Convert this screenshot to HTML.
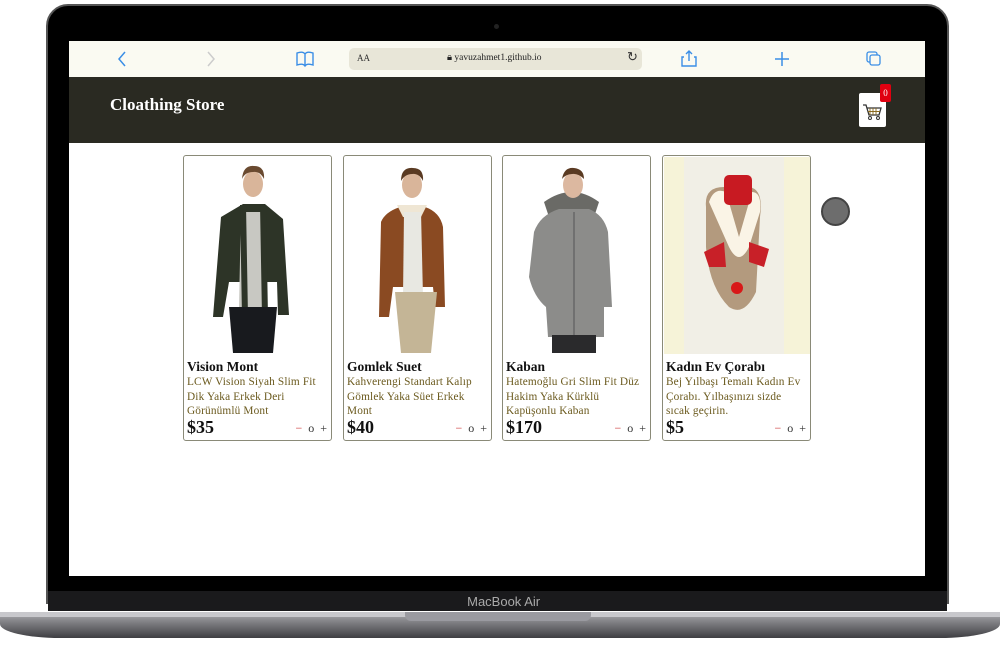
<!DOCTYPE html>
<html><head><meta charset="utf-8"><style>
*{margin:0;padding:0;box-sizing:border-box}
body{width:1000px;height:646px;background:#fff;position:relative;overflow:hidden;font-family:"Liberation Serif",serif}
.abs{position:absolute}
.card{position:absolute;top:155px;width:149px;height:286px;border:1px solid #8a8a78;border-radius:3px;background:#fff;overflow:hidden}
.card svg{position:absolute;left:1px;top:1px}
.t{position:absolute;left:3px;top:203px;font-weight:bold;font-size:13.5px;color:#111}
.d{position:absolute;left:3px;top:219px;width:142px;font-size:11.3px;line-height:14.5px;color:#6b5a1e;letter-spacing:0.15px}
.p{position:absolute;left:3px;top:261px;font-weight:bold;font-size:18px;color:#111}
.q{position:absolute;right:4px;top:265px;font-size:12px;color:#333;letter-spacing:0}
.q b{color:#c33;font-weight:normal}
</style></head><body>
<!-- lid -->
<div class="abs" style="left:46px;top:4px;width:903px;height:600px;background:#000;border-radius:22px 22px 0 0;border:2px solid #555"></div>
<div class="abs" style="left:494px;top:24px;width:5px;height:5px;border-radius:50%;background:#222"></div>
<!-- screen -->
<div class="abs" style="left:69px;top:41px;width:856px;height:535px;background:#fff"></div>
<!-- safari bar -->
<div class="abs" style="left:69px;top:41px;width:856px;height:36px;background:#fafaf2"></div>
<div class="abs" style="left:349px;top:48px;width:293px;height:22px;background:#e8e6d8;border-radius:5px"></div>
<div class="abs" style="left:357px;top:53px;font-size:9px;color:#333">AA</div>
<div class="abs" style="left:447px;top:52px;font-size:9.5px;color:#222">🔒︎ yavuzahmet1.github.io</div>
<div class="abs" style="left:627px;top:49px;font-size:13px;color:#333">↻</div>
<svg class="abs" style="left:110px;top:48px" width="800" height="22">
<path d="M15 4 L9 11 L15 18" fill="none" stroke="#3a8ee6" stroke-width="1.5"/>
<path d="M98 4 L104 11 L98 18" fill="none" stroke="#ccc" stroke-width="1.5"/>
<path d="M187 5 Q193 3 195 6 Q197 3 203 5 V17 Q197 15 195 18 Q193 15 187 17 Z M195 6 V18" fill="none" stroke="#3a8ee6" stroke-width="1.4"/>
<path d="M574 9 H572 V18 H586 V9 H584 M579 13 V3 M576 6 L579 3 L582 6" fill="none" stroke="#3a8ee6" stroke-width="1.4"/>
<path d="M665 11 H679 M672 4 V18" stroke="#3a8ee6" stroke-width="1.5"/>
<rect x="757" y="4" width="10" height="10" rx="2" fill="none" stroke="#3a8ee6" stroke-width="1.3"/>
<rect x="760" y="7" width="10" height="10" rx="2" fill="#fafaf2" stroke="#3a8ee6" stroke-width="1.3"/>
</svg>
<!-- header -->
<div class="abs" style="left:69px;top:77px;width:856px;height:66px;background:#2a2a22"></div>
<div class="abs" style="left:110px;top:95px;font-size:17px;font-weight:bold;color:#fff">Cloathing Store</div>
<div class="abs" style="left:859px;top:93px;width:27px;height:34px;background:#fff;border-radius:2px"></div>
<svg class="abs" style="left:862px;top:103px" width="20" height="18"><path d="M1 2 H4 L7 12 H17 L19 5 H5" fill="none" stroke="#333" stroke-width="1.3"/><path d="M8 5 V12 M11 5 V12 M14 5 V12 M6 8.5 H18" stroke="#8a6a20" stroke-width="0.9"/><circle cx="8" cy="15" r="1.5" fill="none" stroke="#333"/><circle cx="16" cy="15" r="1.5" fill="none" stroke="#333"/></svg>
<div class="abs" style="left:880px;top:84px;width:11px;height:18px;background:#e00010;color:#fff;font-size:9px;text-align:center;line-height:18px;border-radius:2px">0</div>
<div class="abs" style="left:821px;top:197px;width:29px;height:29px;border-radius:50%;background:#6d6d6d;border:2px solid #444"></div>

<div class="card" style="left:183px">
<svg width="146" height="197"><rect width="146" height="197" fill="#fff"/>
<ellipse cx="68" cy="27" rx="10" ry="13" fill="#d9b59a"/><path d="M57 22 Q58 8 69 9 Q80 9 79 22 Q75 14 68 15 Q60 15 57 22Z" fill="#6a4a30"/>
<path d="M36 60 L58 47 H80 L98 62 L104 158 H93 L92 125 H44 L38 160 H28Z" fill="#2d3427"/>
<path d="M56 55 H78 L80 150 H54Z" fill="#c8c8c2"/><path d="M58 48 L60 160 M78 48 L80 160" stroke="#2d3427" stroke-width="6"/>
<path d="M44 150 H92 L88 196 H48Z" fill="#181a1e"/></svg>
<div class="t">Vision Mont</div><div class="d">LCW Vision Siyah Slim Fit Dik Yaka Erkek Deri Görünümlü Mont</div><div class="p">$35</div><div class="q"><b>−</b>&nbsp; o &nbsp;+</div></div>

<div class="card" style="left:343px">
<svg width="146" height="197"><rect width="146" height="197" fill="#fff"/>
<ellipse cx="67" cy="28" rx="10" ry="13" fill="#d9b59a"/><path d="M56 24 Q56 10 68 11 Q79 11 78 24 Q74 16 67 17 Q60 17 56 24Z" fill="#5a3a22"/>
<path d="M36 65 Q40 55 55 50 H80 Q95 55 98 70 L100 150 H90 L88 130 H48 L44 160 H34Z" fill="#8a4a22"/>
<path d="M52 48 H82 L76 60 H58Z" fill="#efe6d4"/><path d="M59 55 H76 L78 140 H58Z" fill="#e8e8e2"/>
<path d="M50 135 H92 L86 196 H56Z" fill="#c4b596"/></svg>
<div class="t">Gomlek Suet</div><div class="d">Kahverengi Standart Kalıp Gömlek Yaka Süet Erkek Mont</div><div class="p">$40</div><div class="q"><b>−</b>&nbsp; o &nbsp;+</div></div>

<div class="card" style="left:502px">
<svg width="146" height="197"><rect width="146" height="197" fill="#fff"/>
<path d="M40 45 Q68 25 95 45 L90 60 H45Z" fill="#6a6a66"/>
<ellipse cx="69" cy="28" rx="10" ry="13" fill="#dcb8a0"/><path d="M58 22 Q60 10 70 11 Q80 12 80 22 Q74 16 68 17 Q62 17 58 22Z" fill="#5a3a22"/>
<path d="M30 75 Q36 58 55 52 H85 Q100 58 104 75 L108 150 H100 L100 180 H44 L42 150 Q30 140 25 120Z" fill="#8c8c8a"/>
<path d="M70 55 V178" stroke="#555" stroke-width="1"/>
<path d="M48 178 H92 V196 H48Z" fill="#2a2a2c"/></svg>
<div class="t">Kaban</div><div class="d">Hatemoğlu Gri Slim Fit Düz Hakim Yaka Kürklü Kapüşonlu Kaban</div><div class="p">$170</div><div class="q"><b>−</b>&nbsp; o &nbsp;+</div></div>

<div class="card" style="left:662px">
<svg width="146" height="197"><rect width="146" height="197" fill="#f6f3d8"/>
<rect x="20" y="0" width="100" height="197" fill="#f1efe6"/>
<path d="M42 50 Q40 30 60 30 H85 Q100 32 96 60 L92 135 Q80 160 65 150 Q45 130 42 90Z" fill="#b39a7e"/>
<path d="M45 45 Q50 30 62 35 L75 80 L88 35 Q98 35 96 55 L85 90 Q75 110 65 90Z" fill="#faf4e6"/>
<rect x="60" y="18" width="28" height="30" rx="5" fill="#c81a22"/>
<path d="M40 95 L60 85 L62 110 L45 110Z M85 85 L105 92 L100 110 L85 105Z" fill="#c82028"/>
<circle cx="73" cy="131" r="6" fill="#d81818"/></svg>
<div class="t">Kadın Ev Çorabı</div><div class="d">Bej Yılbaşı Temalı Kadın Ev Çorabı. Yılbaşınızı sizde sıcak geçirin.</div><div class="p">$5</div><div class="q"><b>−</b>&nbsp; o &nbsp;+</div></div>

<!-- bottom bezel -->
<div class="abs" style="left:48px;top:591px;width:899px;height:20px;background:#1a1a1c"></div>
<div class="abs" style="left:0;top:594px;width:1000px;text-align:center;font-family:'Liberation Sans',sans-serif;font-size:13px;color:#aaa">&nbsp;&nbsp;MacBook Air</div>
<div class="abs" style="left:0;top:612px;width:1000px;height:26px;background:linear-gradient(#b5b5b8,#8a8a8e 30%,#3e3e42);border-radius:0 0 60px 60px/0 0 14px 14px"></div>
<div class="abs" style="left:0;top:612px;width:1000px;height:5px;background:#c8c8cc"></div>
<div class="abs" style="left:405px;top:612px;width:186px;height:9px;background:#9a9aa0;border-radius:0 0 6px 6px"></div>
</body></html>
